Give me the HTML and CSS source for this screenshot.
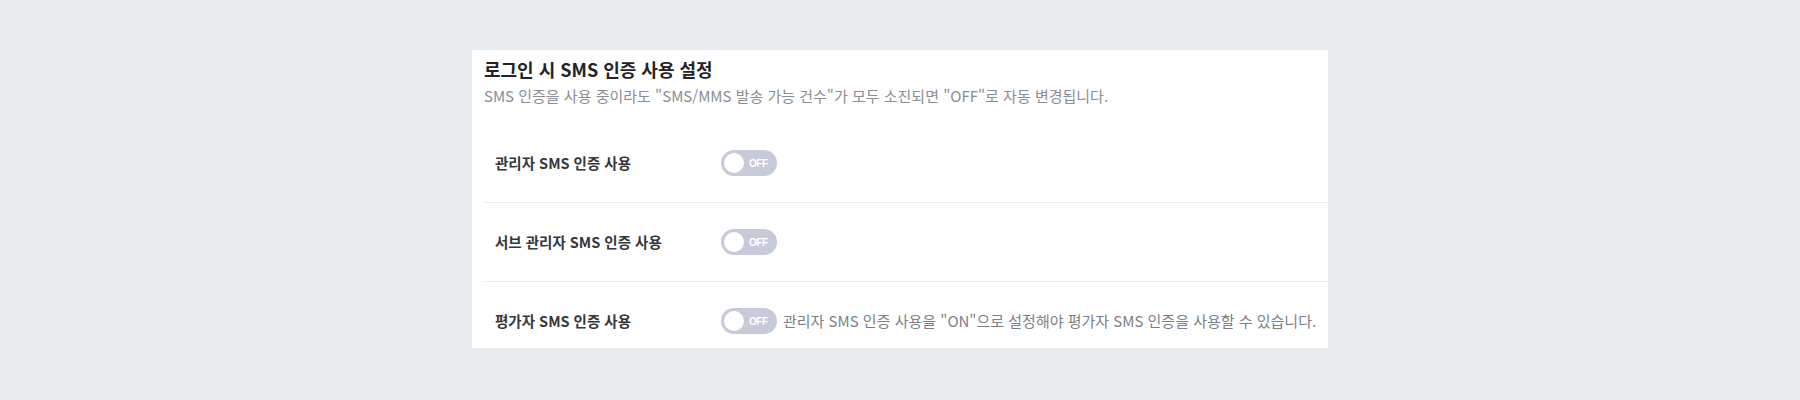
FILE: index.html
```html
<!DOCTYPE html>
<html lang="ko">
<head>
<meta charset="utf-8">
<link rel="stylesheet" href="styles.css">
</head>
<body>
<section class="card">
  <header class="card-head">
    <h2 class="title">로그인 시 SMS 인증 사용 설정</h2>
    <p class="desc">SMS 인증을 사용 중이라도 "SMS/MMS 발송 가능 건수"가 모두 소진되면 "OFF"로 자동 변경됩니다.</p>
  </header>
  <div class="rows">
    <div class="row">
      <div class="label">관리자 SMS 인증 사용</div>
      <div class="field">
        <span class="toggle"><span class="knob"></span><span class="toggle-text">OFF</span></span>
      </div>
    </div>
    <div class="row">
      <div class="label">서브 관리자 SMS 인증 사용</div>
      <div class="field">
        <span class="toggle"><span class="knob"></span><span class="toggle-text">OFF</span></span>
      </div>
    </div>
    <div class="row row-last">
      <div class="label">평가자 SMS 인증 사용</div>
      <div class="field">
        <span class="toggle"><span class="knob"></span><span class="toggle-text">OFF</span></span>
        <span class="help">관리자 SMS 인증 사용을 "ON"으로 설정해야 평가자 SMS 인증을 사용할 수 있습니다.</span>
      </div>
    </div>
  </div>
</section>
</body>
</html>
```

FILE: styles.css
```css
html, body {
  margin: 0;
  padding: 0;
}
body {
  background: #e8ebee;
  font-family: "Noto Sans CJK KR", "Noto Sans", sans-serif;
  height: 400px;
}
.card {
  width: 856px;
  margin: 50px auto 0;
  background: #ffffff;
  padding: 6px 0 0 12px;
  box-sizing: border-box;
}
.card-head {
  padding: 0 0 18px 0;
}
.title {
  margin: 0;
  font-size: 18px;
  line-height: 26px;
  font-weight: 700;
  color: #222428;
}
.desc {
  margin: 4px 0 0;
  font-size: 15px;
  line-height: 20px;
  color: #8a8d93;
}
.row {
  display: flex;
  align-items: center;
  padding: 26px 0 26px 11px;
  border-bottom: 1px solid #eceef0;
}
.row-last {
  border-bottom: none;
  padding-bottom: 14px;
}
.label {
  width: 226px;
  flex: none;
  font-size: 14.5px;
  line-height: 20px;
  font-weight: 700;
  color: #35373b;
}
.field {
  display: flex;
  align-items: center;
  gap: 6px;
}
.toggle {
  display: inline-flex;
  align-items: center;
  width: 56px;
  height: 26px;
  border-radius: 13px;
  background: #c7cad8;
  box-sizing: border-box;
  padding: 0 3px;
  gap: 5px;
}
.knob {
  width: 20px;
  height: 20px;
  border-radius: 50%;
  background: #ffffff;
  flex: none;
}
.toggle-text {
  font-family: "Liberation Sans", "Noto Sans", sans-serif;
  font-size: 10px;
  font-weight: 700;
  color: #ffffff;
  letter-spacing: -0.5px;
}
.help {
  font-size: 15px;
  line-height: 20px;
  color: #7c7f85;
}
```
